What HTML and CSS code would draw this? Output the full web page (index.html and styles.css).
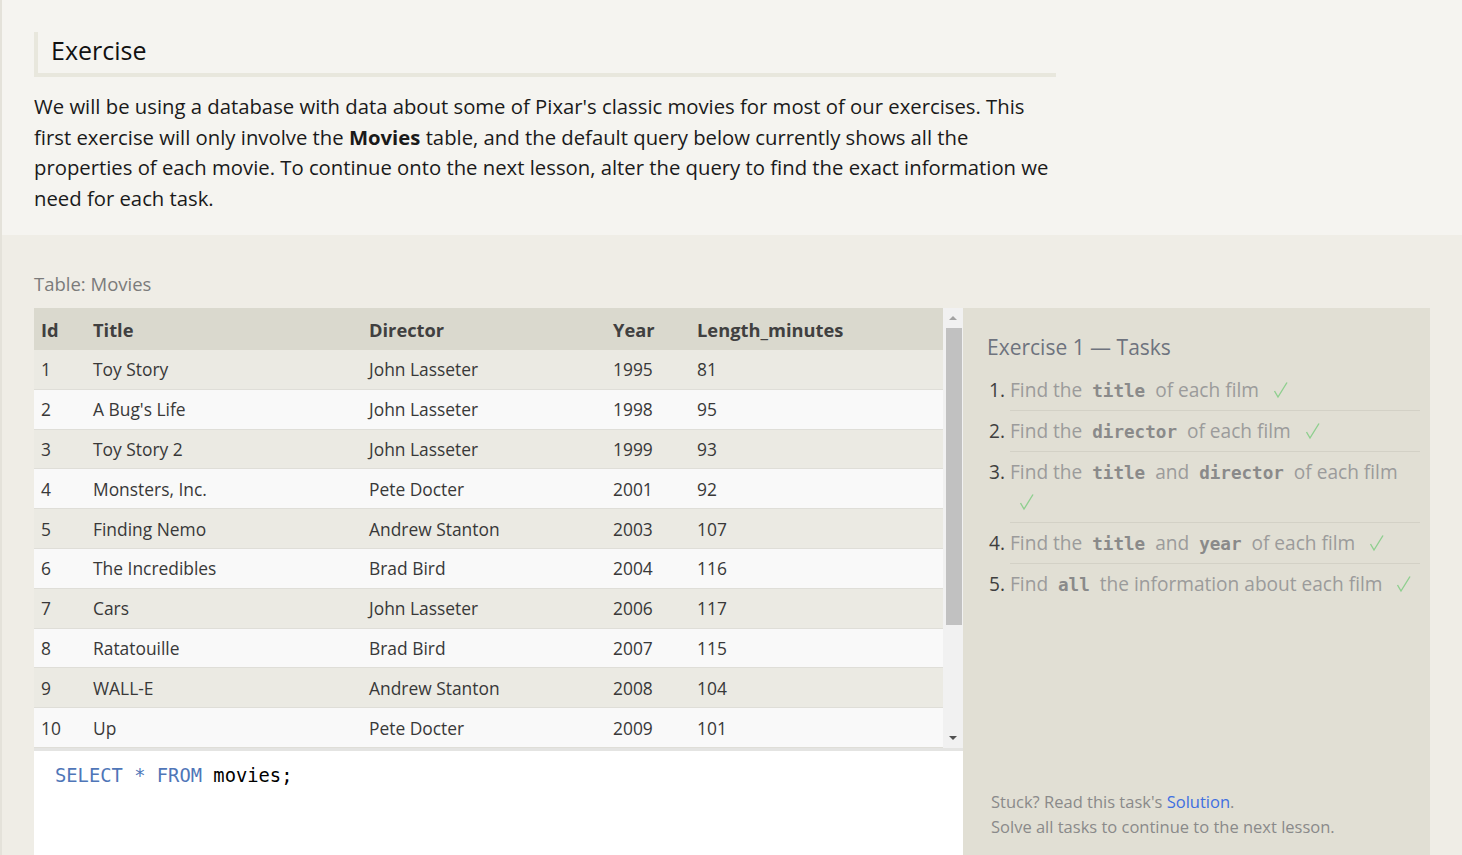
FILE: index.html
```html
<!DOCTYPE html>
<html lang="en">
<head>
<meta charset="utf-8">
<title>SQL Lesson 1</title>
<link rel="stylesheet" href="styles.css">
</head>
<body>
<div class="page">
  <section class="intro">
    <div class="intro-inner">
      <h1 class="ex-title">Exercise</h1>
      <p class="ex-text">We will be using a database with data about some of Pixar's classic movies for most of our exercises. This first exercise will only involve the <strong>Movies</strong> table, and the default query below currently shows all the properties of each movie. To continue onto the next lesson, alter the query to find the exact information we need for each task.</p>
    </div>
  </section>
  <section class="work">
    <div class="table-label">Table: Movies</div>
    <div class="left">
      <div class="table-wrap">
        <table class="movies">
          <colgroup>
            <col class="c-id"><col class="c-title"><col class="c-dir"><col class="c-year"><col class="c-len">
          </colgroup>
          <thead>
            <tr><th>Id</th><th>Title</th><th>Director</th><th>Year</th><th>Length_minutes</th></tr>
          </thead>
          <tbody>
            <tr><td>1</td><td>Toy Story</td><td>John Lasseter</td><td>1995</td><td>81</td></tr>
            <tr><td>2</td><td>A Bug's Life</td><td>John Lasseter</td><td>1998</td><td>95</td></tr>
            <tr><td>3</td><td>Toy Story 2</td><td>John Lasseter</td><td>1999</td><td>93</td></tr>
            <tr><td>4</td><td>Monsters, Inc.</td><td>Pete Docter</td><td>2001</td><td>92</td></tr>
            <tr><td>5</td><td>Finding Nemo</td><td>Andrew Stanton</td><td>2003</td><td>107</td></tr>
            <tr><td>6</td><td>The Incredibles</td><td>Brad Bird</td><td>2004</td><td>116</td></tr>
            <tr><td>7</td><td>Cars</td><td>John Lasseter</td><td>2006</td><td>117</td></tr>
            <tr><td>8</td><td>Ratatouille</td><td>Brad Bird</td><td>2007</td><td>115</td></tr>
            <tr><td>9</td><td>WALL-E</td><td>Andrew Stanton</td><td>2008</td><td>104</td></tr>
            <tr><td>10</td><td>Up</td><td>Pete Docter</td><td>2009</td><td>101</td></tr>
          </tbody>
        </table>
        <div class="scrollbar">
          <div class="arrow arrow-up"></div>
          <div class="thumb"></div>
          <div class="track-rest"></div>
          <div class="arrow arrow-down"></div>
        </div>
      </div>
      <div class="editor">
        <div class="code"><span class="kw">SELECT</span> <span class="kw">*</span> <span class="kw">FROM</span> movies;</div>
      </div>
    </div>
    <aside class="tasks">
      <h2 class="tasks-title">Exercise 1 — Tasks</h2>
      <ol class="task-list">
        <li>Find the <code>title</code> of each film <span class="check"><svg width="16" height="18" viewBox="0 0 16 18"><polyline points="1.5,10 5,16 14,1.5" fill="none" stroke="#8fcf8f" stroke-width="1.4"/></svg></span></li>
        <li>Find the <code>director</code> of each film <span class="check"><svg width="16" height="18" viewBox="0 0 16 18"><polyline points="1.5,10 5,16 14,1.5" fill="none" stroke="#8fcf8f" stroke-width="1.4"/></svg></span></li>
        <li>Find the <code>title</code> and <code>director</code> of each film <span class="check"><svg width="16" height="18" viewBox="0 0 16 18"><polyline points="1.5,10 5,16 14,1.5" fill="none" stroke="#8fcf8f" stroke-width="1.4"/></svg></span></li>
        <li>Find the <code>title</code> and <code>year</code> of each film <span class="check"><svg width="16" height="18" viewBox="0 0 16 18"><polyline points="1.5,10 5,16 14,1.5" fill="none" stroke="#8fcf8f" stroke-width="1.4"/></svg></span></li>
        <li>Find <code>all</code> the information about each film <span class="check"><svg width="16" height="18" viewBox="0 0 16 18"><polyline points="1.5,10 5,16 14,1.5" fill="none" stroke="#8fcf8f" stroke-width="1.4"/></svg></span></li>
      </ol>
      <div class="stuck">
        <p>Stuck? Read this task's <a href="#" class="sol">Solution</a>.</p>
        <p>Solve all tasks to continue to the next lesson.</p>
      </div>
    </aside>
  </section>
</div>
</body>
</html>
```
FILE: styles.css
```css
html, body {
  margin: 0;
  padding: 0;
  height: 100%;
  overflow: hidden;
}
body {
  font-family: "Open Sans", "Noto Sans", sans-serif;
  background: #efede6;
  color: #1a1a1a;
}
.page {
  height: 855px;
  display: flex;
  flex-direction: column;
  border-left: 2px solid #e4e2da;
}
.intro {
  background: #f5f4f0;
  height: 235px;
  box-sizing: border-box;
  padding: 32px 0 0 32px;
}
.intro-inner {
  width: 1022px;
}
.ex-title {
  margin: 0;
  font-weight: 400;
  font-size: 25px;
  line-height: 37px;
  padding: 0 0 4px 13px;
  border-left: 4px solid #e8e7dd;
  border-bottom: 4px solid #e8e7dd;
  color: #111;
}
.ex-text {
  margin: 14px 0 0;
  font-size: 20.3px;
  line-height: 30.7px;
  width: 1022px;
}
.ex-text strong {
  font-weight: 700;
}
.work {
  flex: 1;
  display: grid;
  grid-template-columns: 929px 467px;
  grid-template-rows: auto 1fr;
  padding: 36px 0 0 32px;
  min-height: 0;
}
.table-label {
  grid-column: 1 / 3;
  font-size: 18.5px;
  line-height: 26px;
  color: #7b7b7b;
  margin-bottom: 11px;
}
.left {
  display: flex;
  flex-direction: column;
  min-height: 0;
}
.table-wrap {
  display: flex;
  height: 440px;
  border-bottom: 3px solid #e4e4e2;
  overflow: hidden;
}
.movies {
  width: 909px;
  border-collapse: collapse;
  table-layout: fixed;
  font-size: 17.4px;
  color: #383838;
}
.c-id { width: 52px; }
.c-title { width: 276px; }
.c-dir { width: 244px; }
.c-year { width: 84px; }
.c-len { width: 253px; }
.movies th {
  text-align: left;
  font-weight: 700;
  font-size: 18.3px;
  color: #404040;
  background: #dad9ce;
  height: 42px;
  padding: 0 0 0 7px;
}
.movies td {
  height: 38.8px;
  padding: 0 0 0 7px;
  border-bottom: 1px solid #dfded8;
  white-space: nowrap;
}
.movies tbody tr:nth-child(odd) td { background: #ebeae3; }
.movies tbody tr:nth-child(even) td { background: #f9f9f9; }
.scrollbar {
  width: 20px;
  background: #f1f1f1;
  display: flex;
  flex-direction: column;
  align-items: center;
}
.arrow {
  height: 20px;
  width: 20px;
  display: flex;
  align-items: center;
  justify-content: center;
}
.arrow::before {
  content: "";
  width: 0;
  height: 0;
  border-left: 4px solid transparent;
  border-right: 4px solid transparent;
}
.arrow-up::before { border-bottom: 4px solid #a3a3a3; }
.arrow-down::before { border-top: 4px solid #505050; }
.thumb {
  width: 16px;
  margin-left: 2px;
  height: 297px;
  background: #c1c1c1;
}
.track-rest { flex: 1; }
.editor {
  flex: 1;
  background: #fff;
  padding: 13px 21px;
}
.code {
  font-family: "DejaVu Sans Mono", "Liberation Mono", monospace;
  font-size: 18.8px;
  line-height: 24px;
  color: #000;
}
.kw { color: #4f76b8; }
.tasks {
  background: #e1dfd4;
  padding: 24px 10px 16px 24px;
  display: flex;
  flex-direction: column;
  min-height: 0;
}
.tasks-title {
  margin: 0 0 8px;
  font-weight: 400;
  font-size: 21px;
  line-height: 30px;
  color: #6e737e;
}
.task-list {
  margin: 0;
  padding: 0 0 0 23px;
  font-size: 19.1px;
  line-height: 30px;
  color: #9b9b9b;
}
.task-list li {
  padding: 5px 0;
  border-bottom: 1px solid #d3d1c6;
}
.task-list li:last-child { border-bottom: none; }
.task-list li::marker { color: #3e3e3e; }
.task-list code {
  font-family: "DejaVu Sans Mono", "Liberation Mono", monospace;
  font-weight: 700;
  font-size: 17.6px;
  line-height: 1;
  color: #8a8a8a;
  padding: 0 5px;
}
.check {
  display: inline-block;
  margin-left: 9px;
  vertical-align: -2px;
  line-height: 1;
}
.check svg { display: block; }
.stuck {
  margin-top: auto;
  padding-left: 4px;
  font-size: 16.5px;
  line-height: 25px;
  color: #8a8a8a;
}
.stuck p { margin: 0; }
.sol { color: #3f6fe0; text-decoration: none; }
```
